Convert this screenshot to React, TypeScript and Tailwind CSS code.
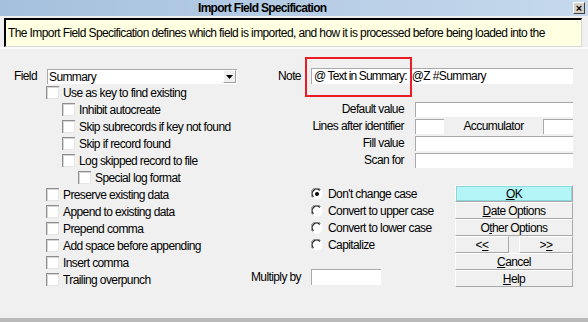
import React from "react";

const font = { fontFamily: "'Liberation Sans', Arial, sans-serif" };

function Check({ label, indent = 0 }: { label: string; indent?: number }) {
  return (
    <div className="flex h-[17px] items-center" style={{ paddingLeft: indent }}>
      <div className="h-[13px] w-[13px] shrink-0 border-t border-l border-[#8e8e8e] bg-white shadow-[inset_1px_1px_0_#d6d6d6,inset_-1px_-1px_0_#e6e6e6]" />
      <span className="ml-[4px] whitespace-nowrap">{label}</span>
    </div>
  );
}

function Radio({ label, checked = false }: { label: string; checked?: boolean }) {
  return (
    <div className="flex h-[17px] items-center">
      <svg width="12" height="12" viewBox="0 0 12 12" className="shrink-0">
        <circle cx="6" cy="6" r="5.5" fill="#ffffff" />
        <path d="M1.5 9.5 A5.5 5.5 0 0 1 9.5 1.5" stroke="#808080" strokeWidth="1" fill="none" />
        <path d="M2.5 8.8 A4.4 4.4 0 0 1 8.8 2.5" stroke="#222" strokeWidth="1.2" fill="none" />
        {checked && <circle cx="6" cy="6" r="2" fill="#000" />}
      </svg>
      <span className="ml-[5px] whitespace-nowrap">{label}</span>
    </div>
  );
}

function Field({ w, className = "", children }: { w: number; className?: string; children?: React.ReactNode }) {
  return (
    <div
      className={"h-[15px] border-t border-l border-[#a9a9a9] bg-white leading-[14px] whitespace-nowrap overflow-hidden " + className}
      style={{ width: w }}
    >
      {children}
    </div>
  );
}

function Btn({ children, ok = false, className = "" }: { children: React.ReactNode; ok?: boolean; className?: string }) {
  return (
    <div
      className={
        "flex h-[17px] items-center justify-center border border-t-white border-l-white border-b-[#a8a8a8] border-r-[#a8a8a8] " +
        (ok ? "bg-[#b4f6f8] shadow-[inset_0_0_0_1px_#8fd6da]" : "bg-[#f0f0f0]") +
        " " +
        className
      }
    >
      {children}
    </div>
  );
}

function LabeledRow({ label, children }: { label: string; children: React.ReactNode }) {
  return (
    <div className="flex h-[17px] items-start">
      <div className="w-[156px] text-right leading-[15px] whitespace-nowrap">{label}</div>
      <div className="ml-[11px] flex">{children}</div>
    </div>
  );
}

export default function App() {
  return (
    <div className="relative h-[322px] w-[588px] overflow-hidden bg-[#f0f0f0] text-[12px] tracking-[-0.6px] text-black" style={font}>
      {/* title bar */}
      <div className="relative h-[16px] bg-gradient-to-r from-[#a5c0dd] to-[#c6d9ed]">
        <div className="pl-[198px] text-[12px] leading-[16px] font-bold tracking-[-0.7px]">
          Import Field Specification
        </div>
        <div className="absolute right-[3px] top-[2px] flex h-[12px] w-[12px] items-center justify-center border border-t-white border-l-white border-b-[#404040] border-r-[#404040] bg-[#d4d0c8] text-[11px] leading-none font-bold tracking-normal">
          ×
        </div>
      </div>
      {/* description */}
      <div className="ml-[4px] mt-[2px] h-[29px] w-[578px] border-t-2 border-l-2 border-t-black border-l-black border-b border-r border-b-[#d8d8d8] border-r-[#d8d8d8] bg-[#ffffe1] pl-[2px] leading-[26px] whitespace-nowrap">
        The Import Field Specification defines which field is imported, and how it is processed before being loaded into the
      </div>
      <div className="h-[2px] bg-[#fafafa]" />

      <div className="flex pt-[19px]">
        {/* left column */}
        <div className="w-[248px] pl-[14px]">
          <div className="flex h-[16px] items-center">
            <span className="w-[33px]">Field</span>
            <div className="flex h-[15px] w-[190px] items-center border-t border-l border-[#a9a9a9] bg-white">
              <span className="flex-1 pl-[1px] leading-[14px]">Summary</span>
              <div className="mr-[1px] flex h-[13px] w-[13px] items-center justify-center border border-t-white border-l-white border-b-[#a0a0a0] border-r-[#a0a0a0] bg-[#f0f0f0]">
                <svg width="7" height="4" viewBox="0 0 7 4">
                  <path d="M0 0 H7 L3.5 4 Z" fill="#000" />
                </svg>
              </div>
            </div>
          </div>
          <div className="pl-[32px]">
            <Check label="Use as key to find existing" />
            <Check label="Inhibit autocreate" indent={16} />
            <Check label="Skip subrecords if key not found" indent={16} />
            <Check label="Skip if record found" indent={16} />
            <Check label="Log skipped record to file" indent={16} />
            <Check label="Special log format" indent={32} />
            <Check label="Preserve existing data" />
            <Check label="Append to existing data" />
            <Check label="Prepend comma" />
            <Check label="Add space before appending" />
            <Check label="Insert comma" />
            <Check label="Trailing overpunch" />
          </div>
        </div>

        {/* right column */}
        <div className="w-[340px]">
          <div className="flex h-[16px] items-start">
            <span className="ml-[30px] w-[33px] leading-[16px]">Note</span>
            <div className="flex h-[16px] w-[262px] border-t border-l border-[#a9a9a9] bg-white pl-[2px] leading-[15px] whitespace-nowrap">
              <span className="shrink-0 tracking-[-0.85px]">@ Text in Summary:</span>
              <span className="ml-[5px] shrink-0">@Z #Summary</span>
            </div>
          </div>
          <div className="mt-[18px]">
            <LabeledRow label="Default value">
              <Field w={158} />
            </LabeledRow>
            <LabeledRow label="Lines after identifier">
              <Field w={29} />
              <div className="w-[99px] text-center leading-[15px]">Accumulator</div>
              <Field w={30} />
            </LabeledRow>
            <LabeledRow label="Fill value">
              <Field w={158} />
            </LabeledRow>
            <LabeledRow label="Scan for">
              <Field w={158} />
            </LabeledRow>
          </div>
          <div className="mt-[15px] flex">
            <div className="w-[207px]">
              <div className="pl-[63px]">
                <Radio label="Don't change case" checked />
                <Radio label="Convert to upper case" />
                <Radio label="Convert to lower case" />
                <Radio label="Capitalize" />
              </div>
              <div className="mt-[16px] flex h-[16px] items-center">
                <span className="w-[53px] text-right">Multiply by</span>
                <div className="ml-[10px] h-[16px] w-[70px] border-t border-l border-[#a9a9a9] bg-white" />
              </div>
            </div>
            <div className="w-[118px]">
              <Btn ok>
                <span className="underline">O</span>K
              </Btn>
              <Btn>
                <span className="underline">D</span>ate Options
              </Btn>
              <Btn>
                O<span className="underline">t</span>her Options
              </Btn>
              <div className="flex justify-between">
                <Btn className="w-[54px]">
                  &lt;<span className="underline">&lt;</span>
                </Btn>
                <Btn className="w-[54px]">
                  &gt;<span className="underline">&gt;</span>
                </Btn>
              </div>
              <Btn>
                <span className="underline">C</span>ancel
              </Btn>
              <Btn>
                <span className="underline">H</span>elp
              </Btn>
            </div>
          </div>
        </div>
      </div>

      <div className="absolute bottom-0 left-0 h-[4px] w-full bg-[#b9b9b9]" />
      {/* annotation */}
      <div className="absolute left-[305px] top-[57px] h-[40px] w-[107px] border-2 border-[#ec1c24]" />
    </div>
  );
}
